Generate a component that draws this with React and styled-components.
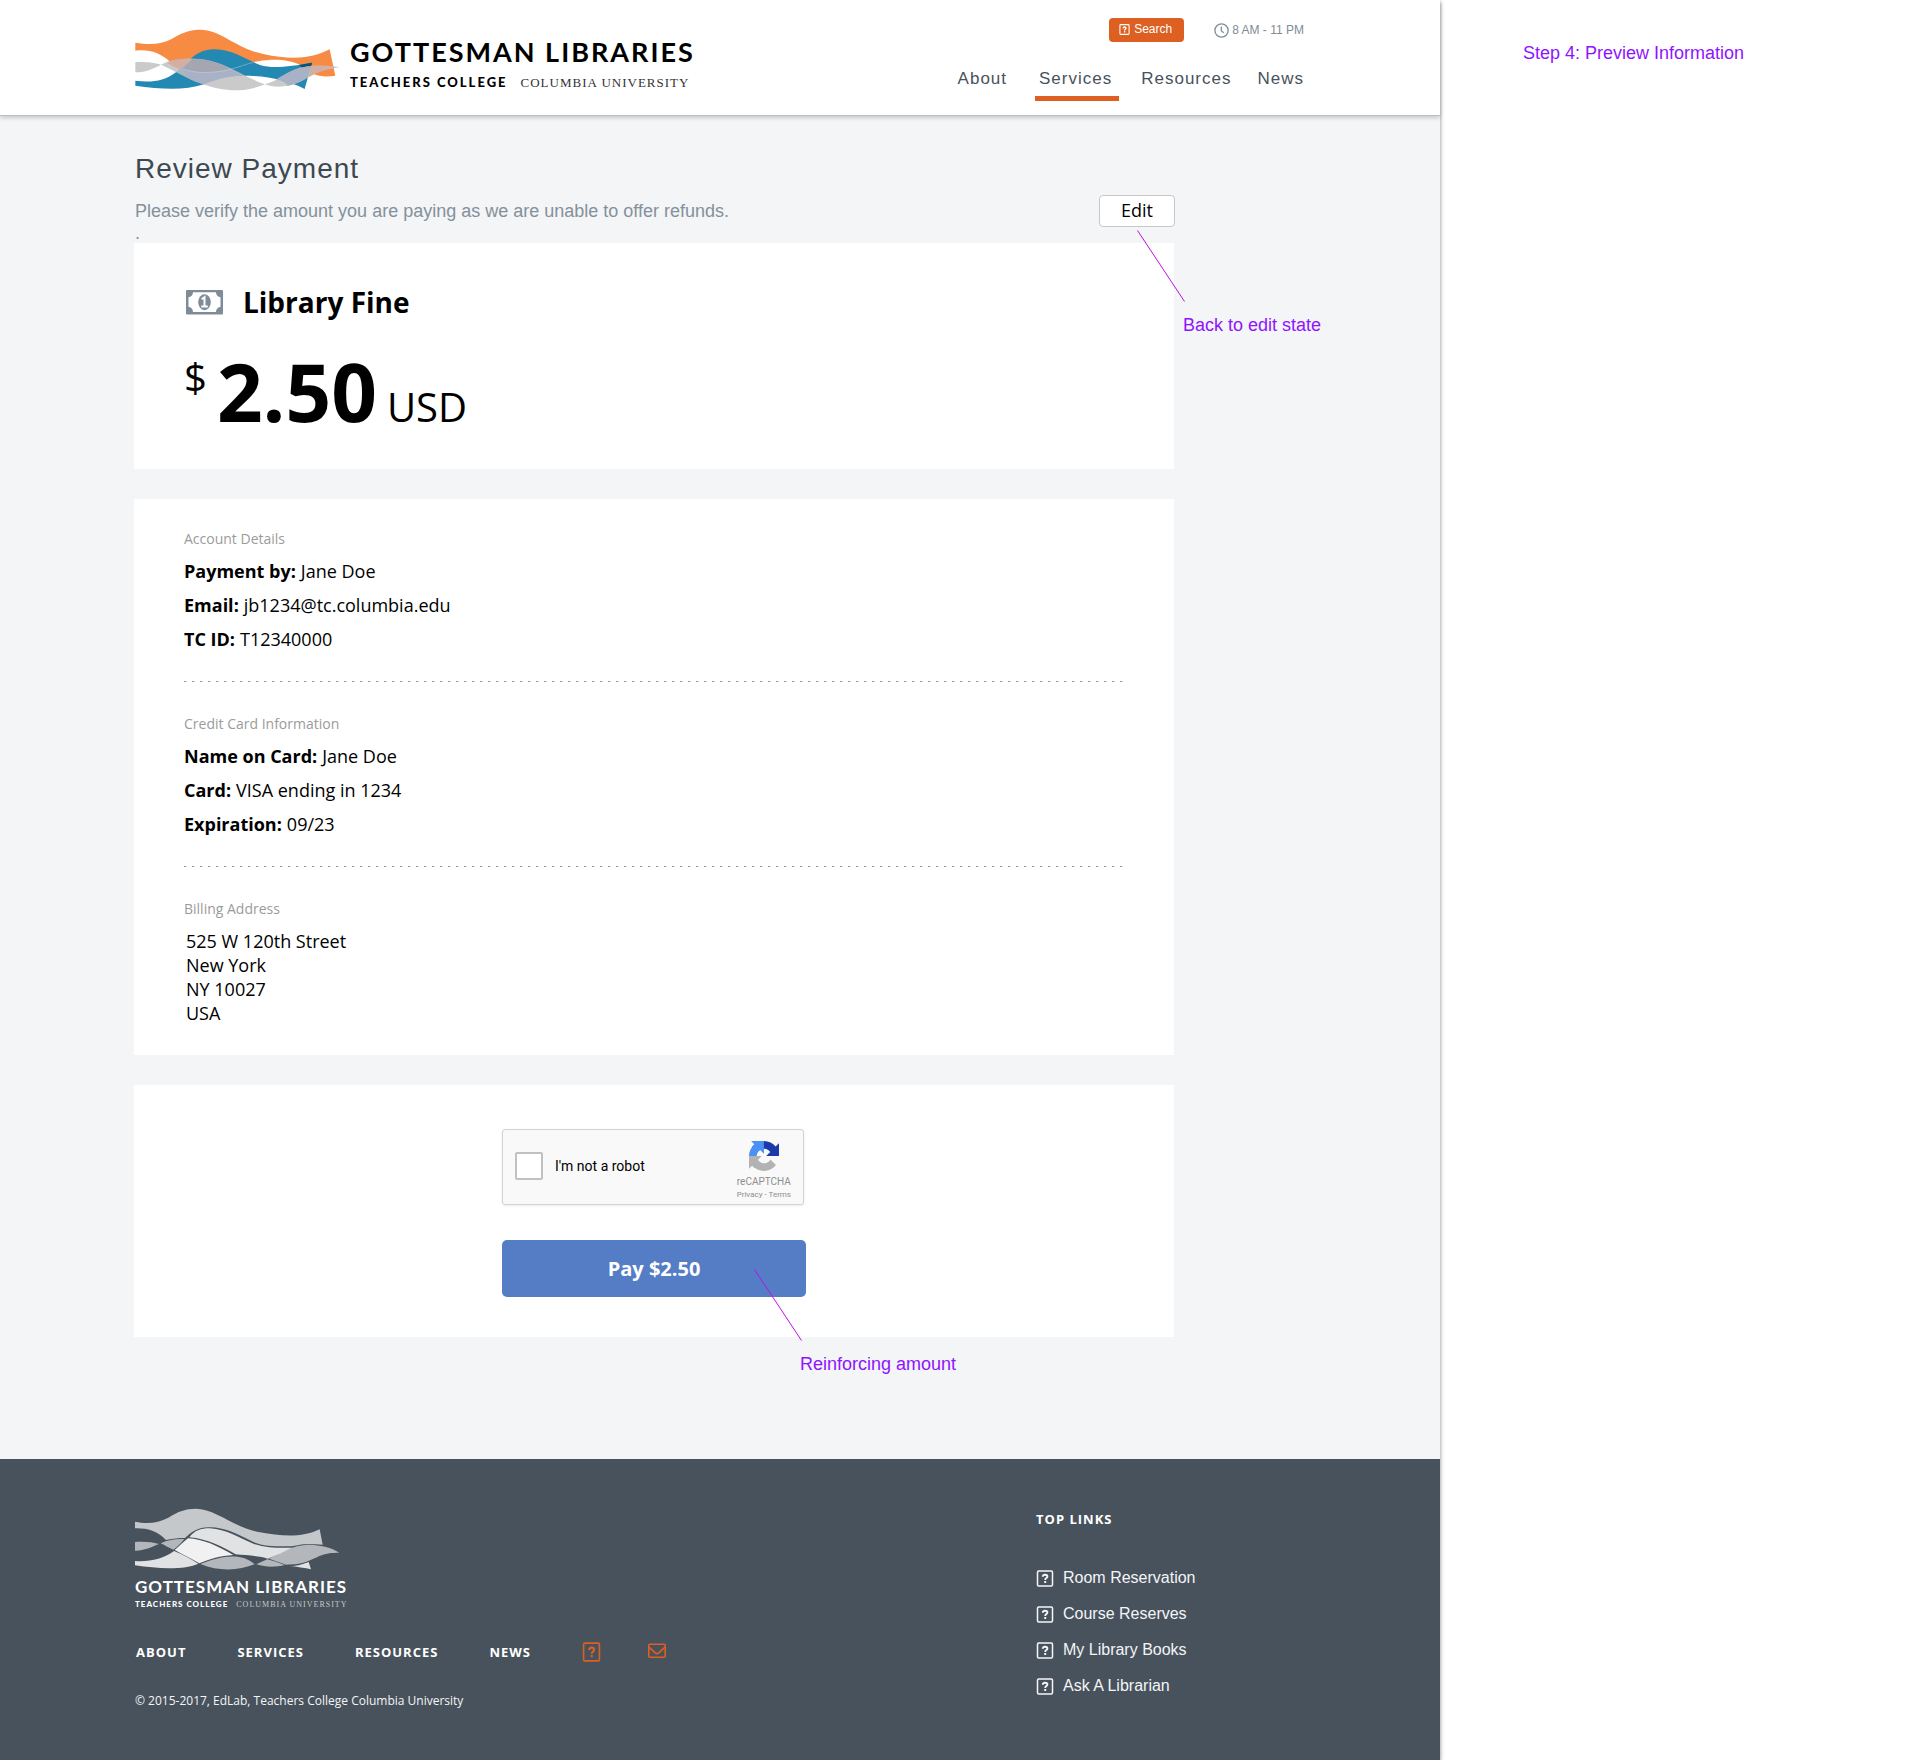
import React from "react";
import styled, { createGlobalStyle } from "styled-components";

const sans = '"Liberation Sans", Arial, sans-serif';
const open = '"Open Sans", "Noto Sans", sans-serif';
const slate = "#48525c";
const orange = "#dd5f22";

const GlobalStyle = createGlobalStyle`
  *, *::before, *::after { box-sizing: border-box; }
  body { margin: 0; background: #fff; font-family: ${sans}; color: #000; }
  h1, h2, p, ul, dl, dd { margin: 0; padding: 0; }
  a { color: inherit; text-decoration: none; }
  button, input { font: inherit; }
  svg { display: block; flex: none; }
`;

const Board = styled.div`
  display: grid;
  grid-template-columns: minmax(0, 1440px) minmax(0, 1fr);
  align-items: start;
`;

const Page = styled.div`
  background: #f3f5f7;
  box-shadow: 0 2px 4px rgba(0, 0, 0, 0.5);
`;

const Note = styled.p`
  font-family: ${sans};
  font-size: 18px;
  line-height: 24px;
  color: #9013fe;
  white-space: nowrap;
`;

const SideNotes = styled.aside`
  padding: 41px 0 0 83px;
`;

/* Header */

const Header = styled.header`
  display: flex;
  justify-content: space-between;
  align-items: flex-start;
  padding: 18px 136px 14px 135px;
  background: #fff;
  border-bottom: 1px solid #bcbec1;
  box-shadow: 0 2px 4px rgba(0, 0, 0, 0.18);
`;

const Brand = styled.a`
  display: flex;
  gap: 10px;
  margin-top: 11px;
`;

const BrandText = styled.div`
  padding-top: 7px;
`;

const BrandName = styled.div`
  font: 700 ${(p) => (p.$small ? "17px/20px" : "27px/32px")} Lato, sans-serif;
  letter-spacing: ${(p) => (p.$small ? 1 : 2)}px;
  white-space: nowrap;
`;

const BrandLine = styled.div`
  display: flex;
  align-items: baseline;
  gap: ${(p) => (p.$small ? 8 : 13)}px;
  margin-top: ${(p) => (p.$small ? 1 : 4)}px;
  font-size: ${(p) => (p.$small ? 8 : 13)}px;
  line-height: ${(p) => (p.$small ? 12 : 20)}px;
  white-space: nowrap;
`;

const College = styled.span`
  font-family: Lato, sans-serif;
  font-weight: 900;
  letter-spacing: ${(p) => (p.$small ? 1 : 2)}px;
`;

const University = styled.span`
  font-family: "Liberation Serif", "Times New Roman", serif;
  letter-spacing: 1px;
  color: ${(p) => (p.$small ? "#c5c8ca" : "#333")};
`;

const HeaderTools = styled.div`
  display: flex;
  flex-direction: column;
  align-items: flex-end;
`;

const Utility = styled.div`
  display: flex;
  align-items: center;
  gap: 30px;
  font-size: 12px;
`;

const SearchButton = styled.button`
  display: flex;
  align-items: center;
  gap: 4px;
  height: 24px;
  padding: 0 12px 2px 10px;
  border: 0;
  border-radius: 4px;
  background: ${orange};
  color: #fff;
`;

const Hours = styled.div`
  display: flex;
  align-items: center;
  gap: 3px;
  color: #7f8c98;
`;

const MainNav = styled.nav`
  display: flex;
  gap: 18px;
  margin-top: 25px;
  margin-right: -4px;
`;

const NavLink = styled.a`
  padding: 0 ${(p) => (p.$active ? 7 : 4)}px 5px 4px;
  border-bottom: 5px solid ${(p) => (p.$active ? orange : "transparent")};
  font-size: 17px;
  line-height: 24px;
  letter-spacing: 1px;
  color: ${slate};

  &:first-child {
    margin-right: 6px;
  }
`;

/* Review */

const Main = styled.main`
  max-width: 1174px;
  padding: 35px 0 122px 134px;
`;

const TitleRow = styled.div`
  display: flex;
  justify-content: space-between;
  align-items: flex-end;
  margin: 0 -1px -1px 1px;
`;

const Title = styled.h1`
  font-size: 28px;
  font-weight: 400;
  line-height: 36px;
  letter-spacing: 1px;
  color: #3d4850;
`;

const Lead = styled.p`
  margin-top: 13px;
  font-size: 18px;
  line-height: 22px;
  color: #84919b;
`;

const Anchor = styled.div`
  position: relative;
  margin-bottom: ${(p) => p.$bottom || 0}px;
`;

const CalloutBox = styled.div`
  position: absolute;
  z-index: 1;
  left: ${(p) => p.$x}px;
  top: ${(p) => p.$y}px;
  pointer-events: none;

  ${Note} {
    margin: 11px 0 0 46px;
  }
`;

const EditButton = styled.button`
  display: block;
  width: 76px;
  height: 32px;
  padding: 0 0 2px;
  border: 1px solid #c8c8c8;
  border-radius: 4px;
  background: #fff;
  color: #000;
  font: 18px/24px ${open};
`;

const Card = styled.section`
  padding: ${(p) => p.$pad};
  background: #fff;
  font-family: ${open};

  & + & {
    margin-top: 30px;
  }
`;

const FineHead = styled.div`
  display: flex;
  align-items: center;
  gap: 18px;
`;

const FineTitle = styled.h2`
  font-size: 28px;
  font-weight: 700;
  line-height: 38px;
`;

const Amount = styled.p`
  display: flex;
  align-items: baseline;
  gap: 10px;
  margin-top: 30px;
  font-size: 40px;
  line-height: 40px;
`;

const Sign = styled.span`
  align-self: flex-start;
  padding-top: 6px;
`;

const Figure = styled.strong`
  font-size: 80px;
  line-height: 80px;
`;

const GroupTitle = styled.h2`
  margin-bottom: ${(p) => p.$gap || 5}px;
  font-size: 14px;
  font-weight: 400;
  line-height: 20px;
  color: #9b9b9b;
`;

const Detail = styled.div`
  display: flex;
  gap: 5px;
  font-size: 18px;
  line-height: 34px;

  dt {
    font-weight: 700;
  }
`;

const Divider = styled.hr`
  height: 1px;
  margin: 25px 0 32px;
  border: 0;
  background: repeating-linear-gradient(90deg, #979797 0 2px, #e4e4e4 2px 3px, transparent 3px 8px);
`;

const Address = styled.address`
  padding-left: 2px;
  font-size: 18px;
  font-style: normal;
  line-height: 24px;
`;

/* Payment */

const PayForm = styled.form`
  width: 304px;
  max-width: 100%;
  margin: 0 auto;
`;

const Captcha = styled.div`
  display: flex;
  align-items: flex-start;
  justify-content: space-between;
  height: 76px;
  margin: 0 2px 35px 0;
  padding: 11px 12px 0;
  border: 1px solid #d3d3d3;
  border-radius: 3px;
  background: #f9f9f9;
  box-shadow: 0 1px 3px rgba(0, 0, 0, 0.08);
  font-family: Roboto, sans-serif;
`;

const RobotLabel = styled.label`
  display: flex;
  align-items: center;
  gap: 12px;
  padding-top: 11px;
  font-size: 14px;
`;

const RobotCheck = styled.input`
  appearance: none;
  width: 28px;
  height: 28px;
  margin: 0;
  border: 2px solid #c1c1c1;
  border-radius: 2px;
  background: #fff;
`;

const CaptchaBrand = styled.div`
  display: flex;
  flex-direction: column;
  align-items: center;
  color: #8e8e8e;
  font-size: 10px;
  line-height: 12px;

  svg {
    margin-bottom: 5px;
  }
`;

const CaptchaLinks = styled.div`
  margin-top: 2px;
  font-size: 8px;
  line-height: 10px;
`;

const PayButton = styled.button`
  display: block;
  width: 100%;
  height: 57px;
  border: 0;
  border-radius: 5px;
  background: #547dc5;
  color: #fff;
  font: 700 20px/28px ${open};
`;

/* Footer */

const Footer = styled.footer`
  display: grid;
  grid-template-columns: minmax(0, 1fr) 268px;
  padding: 49px 136px 49px 135px;
  background: ${slate};
  color: #fff;
  font-family: ${open};
`;

const FooterBrand = styled.a`
  display: block;

  svg {
    margin-bottom: 7px;
  }
`;

const FooterNav = styled.nav`
  display: flex;
  align-items: center;
  gap: 51px;
  margin-top: 31px;
  padding-left: 1px;
  font-size: 13px;
  font-weight: 700;
  line-height: 20px;
  letter-spacing: 1px;

  a:last-child {
    margin-left: -4px;
  }
`;

const Copyright = styled.p`
  margin-top: 29px;
  font-size: 12px;
  line-height: 20px;
  color: #f3f5f7;
`;

const TopLinks = styled.div`
  padding-top: 1px;
`;

const LinksTitle = styled.h2`
  font-size: 13px;
  font-weight: 700;
  line-height: 20px;
  letter-spacing: 1px;
`;

const LinkList = styled.ul`
  margin-top: 31px;
  list-style: none;
  font: 16px/36px ${sans};
  color: #f3f5f7;

  a {
    display: flex;
    align-items: center;
    gap: 9px;
  }
`;

/* Drawings */

const QuestionIcon = ({ width = 18, height = 17, color = "currentColor", weight = 1.5 }) => (
  <svg width={width} height={height} viewBox="0 0 18 17" preserveAspectRatio="none" fill="none" stroke={color} strokeWidth={weight} aria-hidden="true">
    <rect x="1.5" y="1" width="15" height="15" rx="1.2" />
    <path d="M6.7 6.8c.1-1.4 1-2.1 2.4-2.1s2.3.7 2.3 1.8c0 1.6-2.2 1.6-2.2 3.4" strokeWidth={weight + 0.4} />
    <path d="M8.2 12h2" strokeWidth="2" />
  </svg>
);

const ClockIcon = () => (
  <svg width="15" height="15" viewBox="0 0 15 15" fill="none" stroke="currentColor" strokeWidth="1.3" aria-hidden="true">
    <circle cx="7.5" cy="7.5" r="6.6" />
    <path d="M7.3 3.4v4.4l2.4 2" />
  </svg>
);

const MailIcon = () => (
  <svg width="18" height="18" viewBox="0 0 18 18" fill="none" stroke={orange} strokeWidth="1.6" aria-hidden="true">
    <rect x=".8" y="1.2" width="16.4" height="13" rx="1" />
    <path d="M1 4.2l6.2 5.6c1.2 1 2.4 1 3.6 0L17 4.2" />
  </svg>
);

const MoneyIcon = () => (
  <svg width="41" height="26" viewBox="1 0 41 26" aria-hidden="true">
    <rect x="3" y="1" width="37" height="24.5" rx="1" fill="#7f8c98" />
    <path d="M10 3.3H33a4.5 5 0 0 0 4.5 5V18a4.5 5 0 0 0-4.5 5H10a4.5 5 0 0 0-4.5-5V8.3a4.5 5 0 0 0 4.5-5Z" fill="#fff" />
    <ellipse cx="21.5" cy="13.2" rx="6.3" ry="8" fill="#7f8c98" />
    <path d="M18.7 10.300l2.8-2v9M18.2 17.400h6.600" fill="none" stroke="#fff" strokeWidth="2" />
  </svg>
);

const WavesColor = () => (
  <svg width="205" height="62" viewBox="15 12 615 186" aria-hidden="true">
    <path fill="#f88b43" d="M16 53C60 61 95 58 125 42 165 17 190 14 212 14c60 0 105 56 188 73 50 11 90 13 125 9 30-4 53-12 74-23l17 79c-45 7-73-3-101-29-35-20-85-22-130-14-45 10-85 32-145 34-40 3-90-7-125-37C90 85 60 72 16 77Z" />
    <path fill="#2389b3" d="M16 167c44 5 84 4 124-27 40-35 60-67 115-67 55 2 85 27 135 47 40 12 90 4 156-7l-22 79c-44-22-94-36-154-39-50-2-90 2-148 25-62 20-132 14-206 4Z" />
    <path fill="#0b5075" d="M508 120l38-7-4 17c-8 1-15 2-23 2Z" />
    <path fill="#c1c1c1" fillOpacity=".85" d="M16 111c34-1 54 1 77 8-23 11-43 23-77 23ZM93 119c37-19 97-24 147-12 60 13 110 53 165 71-65 27-125 22-195-3-40-15-80-40-117-56ZM405 178c45-13 75-43 125-54 30-5 70-2 98 3-38 5-68 13-98 33-40 25-90 32-125 18Z" />
    <path fill="#d3aea3" d="M110 112c20-9 48-12 77-10-14 11-24 21-36 31-14-4-28-12-41-21ZM543 123c22-2 45-1 67 2l1 5c-26 4-50 12-76 27Z" />
    <path fill="#a6a6b2" d="M187 102c18-1 36 1 53 5 22 5 42 13 62 25-38 9-62 11-82 10-20 0-43-3-64-11 12-10 20-18 31-29Z" />
    <path fill="#a9b1c7" d="M302 132c13 6 24 13 36 20-46-1-76 6-116 26-18-6-38-15-58-26 22 0-10-16-8-21 21 8 44 11 64 11 28 1 52-3 82-10ZM541 128l-10 31c-32 21-62 24-62 24 10-4-10-14-30-20 26-16 50-30 74-36Z" />
    <path fill="none" stroke="#d5dde6" strokeWidth="1.5" strokeOpacity=".8" d="M156 131c30 10 54 13 84 11 60-2 100-24 145-34" />
  </svg>
);

const WavesGrey = () => (
  <svg width="205" height="62" viewBox="45 88 615 186" aria-hidden="true">
    <path fill="#c5c8ca" d="M45 129c40 8 70 3 100-12 30-19 52-27 82-27 60 0 110 55 193 71 60 11 125 18 179-9l9 46c-18 0-48-2-68 0-18 4-24 5-40 5-48 0-72 0-100-13-50-25-90-46-135-44-30 0-50 13-70 32-20 0-35 2-57 6-28-29-58-36-93-35Z" />
    <path fill="#b3b6ba" d="M45 190c30-2 50 0 72 6-22 9-47 21-72 20ZM122 194c23-12 48-14 71-13-8 11-18 21-33 32-15-6-25-13-38-19ZM241 256c59-24 124-36 163 1-45 18-105 23-163-1ZM409 257c11-5 21-10 33-15 18 5 33 10 52 17-24 6-54 8-85-2ZM447 240c43-18 63-41 123-41 30 0 60 6 88 23-48 0-58 10-88 23-30 13-50 13-72 13-18-8-38-13-51-18Z" />
    <path fill="#f1f1f2" d="M204 179c46 3 86 21 136 50-40 3-70 11-102 25-23-14-48-26-74-40 16-14 26-24 40-35Z" />
    <path fill="#e0e2e3" d="M208 176c17-21 32-27 62-27 50 3 80 26 130 46 40 13 80 13 116 12-26 13-46 23-73 33-23-8-63-10-96-13-37-22-87-47-139-51ZM45 247c45 3 85-7 117-30 28 11 48 23 73 38-35 17-115 17-190 5ZM510 262c30 0 40-7 56-12l7 22c-18-4-43-8-63-10Z" />
  </svg>
);

const CaptchaLogo = () => (
  <svg width="30" height="30" viewBox="0 0 64 64" aria-hidden="true">
    <path fill="#1c3aa9" d="M64 31.955a33 33 0 0 0-.023-1.377V4.687l-7.158 7.158C50.961 4.674 42.033.093 32.036.093c-10.404 0-19.646 4.96-25.49 12.64l11.732 11.856a15.55 15.55 0 0 1 4.754-5.334c2.05-1.6 4.952-2.906 9.004-2.906.489 0 .867.057 1.144.165 5.02.396 9.371 3.166 11.933 7.187l-8.304 8.304c10.519-.041 22.401-.066 27.19.006" />
    <path fill="#4a90f5" d="M31.862.094a33 33 0 0 0-1.377.023H4.594l7.158 7.158C4.581 13.133 0 22.06 0 32.058c0 10.404 4.96 19.646 12.64 25.49l11.856-11.732a15.55 15.55 0 0 1-5.334-4.754c-1.6-2.05-2.906-4.952-2.906-9.004 0-.489.057-.867.165-1.144.396-5.02 3.166-9.371 7.187-11.933l8.304 8.304c-.041-10.519-.066-22.401.006-27.19" />
    <path fill="#b3b3b3" d="M.001 32.058c.003.461.014.92.023 1.377v25.891l7.158-7.158c5.858 7.171 14.786 11.752 24.783 11.752 10.404 0 19.646-4.96 25.49-12.64L45.723 39.424a15.55 15.55 0 0 1-4.754 5.334c-2.05 1.6-4.952 2.906-9.004 2.906-.489 0-.867-.057-1.144-.165-5.02-.396-9.371-3.166-11.933-7.187l8.304-8.304c-10.519.041-22.401.066-27.19-.006" />
  </svg>
);

/* Composed parts */

const Wordmark = ({ small }) => (
  <>
    <BrandName $small={small}>GOTTESMAN LIBRARIES</BrandName>
    <BrandLine $small={small}>
      <College $small={small}>TEACHERS COLLEGE</College>
      <University $small={small}>COLUMBIA UNIVERSITY</University>
    </BrandLine>
  </>
);

const Callout = ({ x, y, children }) => (
  <CalloutBox $x={x} $y={y}>
    <svg width="48" height="72" viewBox="0 0 48 72" aria-hidden="true">
      <path d="M.5.5L47.5 71.5" stroke="#bd10e0" strokeWidth="1" />
    </svg>
    <Note>{children}</Note>
  </CalloutBox>
);

const Details = ({ rows }) => (
  <dl>
    {rows.map(([term, value]) => (
      <Detail key={term}>
        <dt>{term}:</dt>
        <dd>{value}</dd>
      </Detail>
    ))}
  </dl>
);

const account = [
  ["Payment by", "Jane Doe"],
  ["Email", "jb1234@tc.columbia.edu"],
  ["TC ID", "T12340000"],
];

const creditCard = [
  ["Name on Card", "Jane Doe"],
  ["Card", "VISA ending in 1234"],
  ["Expiration", "09/23"],
];

const topLinks = ["Room Reservation", "Course Reserves", "My Library Books", "Ask A Librarian"];

export default function App() {
  return (
    <Board>
      <GlobalStyle />
      <Page>
        <Header>
          <Brand href="#">
            <WavesColor />
            <BrandText>
              <Wordmark />
            </BrandText>
          </Brand>
          <HeaderTools>
            <Utility>
              <SearchButton type="button">
                <QuestionIcon width={11} height={11} weight={1.8} />
                Search
              </SearchButton>
              <Hours>
                <ClockIcon />
                8 AM - 11 PM
              </Hours>
            </Utility>
            <MainNav>
              {["About", "Services", "Resources", "News"].map((name) => (
                <NavLink key={name} href="#" $active={name === "Services"}>
                  {name}
                </NavLink>
              ))}
            </MainNav>
          </HeaderTools>
        </Header>

        <Main>
          <TitleRow>
            <div>
              <Title>Review Payment</Title>
              <Lead>
                Please verify the amount you are paying as we are unable to offer refunds.
                <br />.
              </Lead>
            </div>
            <Anchor $bottom={17}>
              <EditButton type="button">Edit</EditButton>
              <Callout x={38} y={35}>Back to edit state</Callout>
            </Anchor>
          </TitleRow>

          <Card $pad="40px 50px 38px">
            <FineHead>
              <MoneyIcon />
              <FineTitle>Library Fine</FineTitle>
            </FineHead>
            <Amount>
              <Sign>$</Sign>
              <Figure>2.50</Figure>
              <span>USD</span>
            </Amount>
          </Card>

          <Card $pad="30px 50px">
            <GroupTitle>Account Details</GroupTitle>
            <Details rows={account} />
            <Divider />
            <GroupTitle>Credit Card Information</GroupTitle>
            <Details rows={creditCard} />
            <Divider />
            <GroupTitle $gap={10}>Billing Address</GroupTitle>
            <Address>
              525 W 120th Street
              <br />
              New York
              <br />
              NY 10027
              <br />
              USA
            </Address>
          </Card>

          <Card $pad="44px 0 40px">
            <PayForm onSubmit={(e) => e.preventDefault()}>
              <Captcha>
                <RobotLabel htmlFor="robot">
                  <RobotCheck id="robot" type="checkbox" />
                  I'm not a robot
                </RobotLabel>
                <CaptchaBrand>
                  <CaptchaLogo />
                  reCAPTCHA
                  <CaptchaLinks>
                    <a href="#">Privacy</a> - <a href="#">Terms</a>
                  </CaptchaLinks>
                </CaptchaBrand>
              </Captcha>
              <Anchor>
                <PayButton type="submit">Pay $2.50</PayButton>
                <Callout x={252} y={29}>Reinforcing amount</Callout>
              </Anchor>
            </PayForm>
          </Card>
        </Main>

        <Footer>
          <div>
            <FooterBrand href="#">
              <WavesGrey />
              <Wordmark small />
            </FooterBrand>
            <FooterNav>
              <a href="#">ABOUT</a>
              <a href="#">SERVICES</a>
              <a href="#">RESOURCES</a>
              <a href="#">NEWS</a>
              <a href="#" aria-label="Help">
                <QuestionIcon width={19} height={20} color={orange} />
              </a>
              <a href="#" aria-label="Email">
                <MailIcon />
              </a>
            </FooterNav>
            <Copyright>© 2015-2017, EdLab, Teachers College Columbia University</Copyright>
          </div>
          <TopLinks>
            <LinksTitle>TOP LINKS</LinksTitle>
            <LinkList>
              {topLinks.map((name) => (
                <li key={name}>
                  <a href="#">
                    <QuestionIcon />
                    {name}
                  </a>
                </li>
              ))}
            </LinkList>
          </TopLinks>
        </Footer>
      </Page>
      <SideNotes>
        <Note>Step 4: Preview Information</Note>
      </SideNotes>
    </Board>
  );
}
